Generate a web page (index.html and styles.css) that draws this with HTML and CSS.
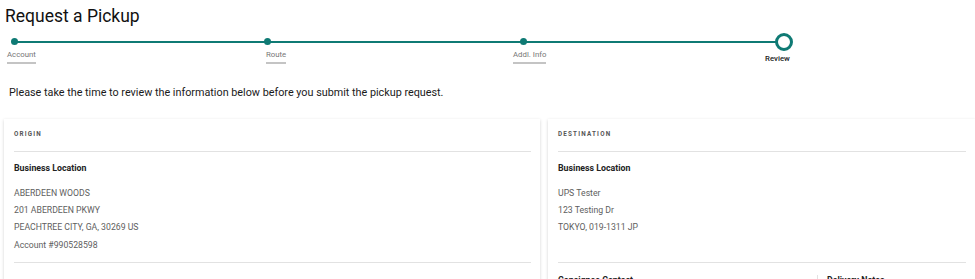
FILE: index.html
```html
<!DOCTYPE html>
<html lang="en">
<head>
   <meta charset="UTF-8">
   <meta name="viewport" content="width=device-width, initial-scale=1.0">
   <title>Request a Pickup</title>
   <link rel="stylesheet" href="styles.css">
</head>
<body>

   <h1 class="page-title">Request a Pickup</h1>

   <div class="stepper">
      <div class="step step-done step-account">
         <span class="dot"></span>
         <span class="step-label">Account</span>
      </div>
      <div class="step step-done step-route">
         <span class="dot"></span>
         <span class="step-label">Route</span>
      </div>
      <div class="step step-done step-info">
         <span class="dot"></span>
         <span class="step-label">Addl. Info</span>
      </div>
      <div class="step step-current">
         <span class="ring"></span>
         <span class="step-label">Review</span>
      </div>
   </div>

   <p class="intro">Please take the time to review the information below before you submit the pickup request.</p>

   <div class="cards">
      <section class="card">
         <h2 class="card-head">ORIGIN</h2>
         <div class="block">
            <h3 class="block-title">Business Location</h3>
            <p class="line">ABERDEEN WOODS</p>
            <p class="line">201 ABERDEEN PKWY</p>
            <p class="line">PEACHTREE CITY, GA, 30269 US</p>
            <p class="line">Account #990528598</p>
         </div>
      </section>

      <section class="card">
         <h2 class="card-head">DESTINATION</h2>
         <div class="block">
            <h3 class="block-title">Business Location</h3>
            <p class="line">UPS Tester</p>
            <p class="line">123 Testing Dr</p>
            <p class="line">TOKYO, 019-1311 JP</p>
            <p class="line empty"></p>
         </div>
         <div class="split">
            <div class="split-col">
               <h3 class="block-title">Consignee Contact</h3>
            </div>
            <div class="split-col">
               <h3 class="block-title">Delivery Notes</h3>
            </div>
         </div>
      </section>
   </div>

</body>
</html>
```

FILE: styles.css
```css
body {
   font-family: Roboto, 'Liberation Sans', sans-serif;
   margin: 0;
   padding: 0;
   background-color: #fff;
   color: #222;
   overflow: hidden;
}
.page-title {
   font-size: 17.5px;
   font-weight: 400;
   margin: 0;
   padding: 4px 0 0 5px;
   line-height: 24px;
   color: #111;
}

/* stepper */
.stepper {
   position: relative;
   display: grid;
   grid-template-columns: 259px 247px 252px 30px;
   margin: 10px 0 0 7px;
   height: 34px;
}
.stepper::before {
   content: '';
   position: absolute;
   left: 8px;
   width: 770px;
   top: 3px;
   height: 2px;
   background-color: #0f7a74;
}
.step {
   position: relative;
   display: flex;
   flex-direction: column;
   align-items: flex-start;
}
.dot {
   width: 7px;
   height: 7px;
   border-radius: 50%;
   background-color: #0f7a74;
   margin-left: 4px;
}
.step-route .dot {
   margin-left: -2px;
}
.step-info .dot {
   margin-left: 7px;
}
.step-label {
   font-size: 7.8px;
   color: #777;
   margin-top: 5px;
   padding-bottom: 3px;
   border-bottom: 2px solid #c4c4c4;
}
.ring {
   width: 12px;
   height: 12px;
   border: 3px solid #0f7a74;
   border-radius: 50%;
   background-color: #fff;
   margin: -5px 0 0 10px;
}
.step-current .step-label {
   color: #222;
   font-weight: 500;
   border-bottom: none;
   margin-top: 3px;
}

.intro {
   font-size: 10.8px;
   margin: 14px 0 0 9px;
   color: #1a1a1a;
}

/* cards */
.cards {
   display: grid;
   grid-template-columns: 536px 1fr;
   gap: 8px;
   margin: 20px 0 0 4px;
}
.card {
   background-color: #fff;
   box-shadow: 0 1px 3px rgba(0, 0, 0, 0.18);
   padding: 0 9px 0 10px;
}
.card-head {
   font-size: 6.3px;
   font-weight: 700;
   letter-spacing: 1.2px;
   color: #555;
   margin: 0;
   padding: 11px 0 13px;
   border-bottom: 1px solid #e2e2e2;
}
.block {
   padding: 11px 0 8px;
   border-bottom: 1px solid #e2e2e2;
}
.block-title {
   font-size: 8.8px;
   font-weight: 700;
   color: #222;
   margin: 0 0 12px;
}
.line {
   font-size: 8.7px;
   color: #5e5e5e;
   margin: 0;
   line-height: 17.2px;
}
.line.empty {
   height: 17px;
}
.split {
   display: grid;
   grid-template-columns: 259px 1fr;
   padding-top: 12px;
}
.split-col + .split-col {
   border-left: 1px solid #e2e2e2;
   padding-left: 9px;
}
```
